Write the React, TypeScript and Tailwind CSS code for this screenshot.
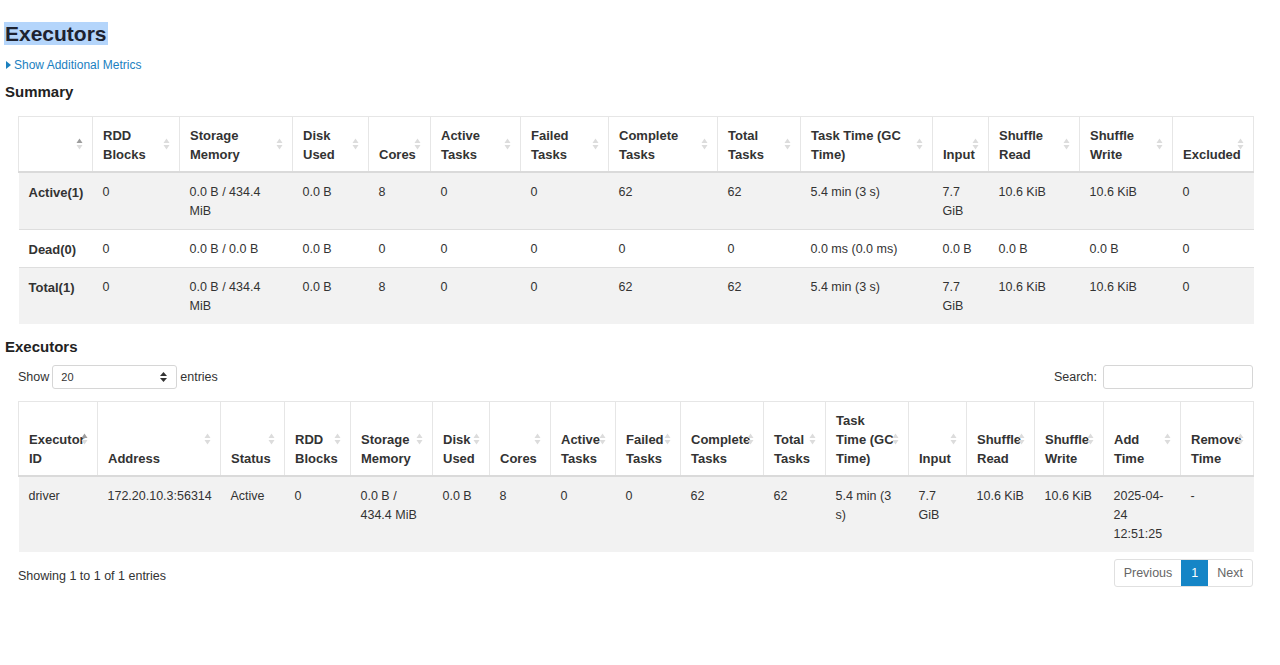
import React from 'react';

const SUMMARY_COLS = [74, 87, 113, 76, 62, 90, 88, 109, 83, 132, 56, 91, 93, 81];
const SUMMARY_HEAD = [
  '',
  'RDD Blocks',
  'Storage Memory',
  'Disk Used',
  'Cores',
  'Active Tasks',
  'Failed Tasks',
  'Complete Tasks',
  'Total Tasks',
  'Task Time (GC Time)',
  'Input',
  'Shuffle Read',
  'Shuffle Write',
  'Excluded',
];
const SUMMARY_ROWS = [
  ['Active(1)', '0', '0.0 B / 434.4 MiB', '0.0 B', '8', '0', '0', '62', '62', '5.4 min (3 s)', '7.7 GiB', '10.6 KiB', '10.6 KiB', '0'],
  ['Dead(0)', '0', '0.0 B / 0.0 B', '0.0 B', '0', '0', '0', '0', '0', '0.0 ms (0.0 ms)', '0.0 B', '0.0 B', '0.0 B', '0'],
  ['Total(1)', '0', '0.0 B / 434.4 MiB', '0.0 B', '8', '0', '0', '62', '62', '5.4 min (3 s)', '7.7 GiB', '10.6 KiB', '10.6 KiB', '0'],
];

const EXEC_COLS = [79, 123, 64, 66, 82, 57, 61, 65, 65, 83, 62, 83, 58, 68, 69, 77, 73];
const EXEC_HEAD = [
  'Executor ID',
  'Address',
  'Status',
  'RDD Blocks',
  'Storage Memory',
  'Disk Used',
  'Cores',
  'Active Tasks',
  'Failed Tasks',
  'Complete Tasks',
  'Total Tasks',
  'Task Time (GC Time)',
  'Input',
  'Shuffle Read',
  'Shuffle Write',
  'Add Time',
  'Remove Time',
];
const EXEC_ROWS = [
  ['driver', '172.20.10.3:56314', 'Active', '0', '0.0 B / 434.4 MiB', '0.0 B', '8', '0', '0', '62', '62', '5.4 min (3 s)', '7.7 GiB', '10.6 KiB', '10.6 KiB', '2025-04-24 12:51:25', '-'],
];

function SortIcon({ active }: { active?: boolean }) {
  return (
    <svg
      width="7"
      height="12"
      viewBox="0 0 7 12"
      className="absolute right-[9px] top-1/2 -translate-y-1/2"
    >
      <path d="M3.5 0.5 L6.5 5 L0.5 5 Z" fill={active ? '#9c9c9c' : '#dcdcdc'} />
      <path d="M3.5 11.5 L6.5 7 L0.5 7 Z" fill="#dcdcdc" />
    </svg>
  );
}

function DataTable({
  cols,
  head,
  rows,
  boldFirst,
}: {
  cols: number[];
  head: string[];
  rows: string[][];
  boldFirst?: boolean;
}) {
  return (
    <table className="table-fixed border-collapse w-[1235px] text-[12.5px] text-[#333]">
      <colgroup>
        {cols.map((w, i) => (
          <col key={i} style={{ width: w }} />
        ))}
      </colgroup>
      <thead>
        <tr>
          {head.map((h, i) => (
            <th
              key={i}
              className="relative border border-[#e6e6e6] border-b-2 border-b-[#dadada] px-[10px] pt-[9px] pb-[7px] text-left align-bottom text-[13px] font-bold leading-[19px] text-[#333]"
            >
              {h}
              <SortIcon active={i === 0} />
            </th>
          ))}
        </tr>
      </thead>
      <tbody>
        {rows.map((r, ri) => (
          <tr key={ri} className={ri % 2 === 0 ? 'bg-[#f2f2f2]' : 'bg-white'}>
            {r.map((c, ci) => (
              <td
                key={ci}
                className={`border-t border-[#dedede] px-[10px] pt-[10px] pb-[8px] align-top leading-[19px] ${
                  boldFirst && ci === 0 ? 'text-[13px] font-bold' : ''
                }`}
              >
                {c}
              </td>
            ))}
          </tr>
        ))}
      </tbody>
    </table>
  );
}

export default function App() {
  return (
    <div className="min-h-screen bg-white font-['Liberation_Sans',Arial,sans-serif] text-[#333]">
      <div className="pl-[4px] pt-[22px]">
        <h3 className="text-[21px] font-bold leading-[24px] text-[#1d2230]">
          <span className="bg-[#b4d5fb] px-[1px]">Executors</span>
        </h3>

        <div className="mt-[12px] flex items-center gap-[3px] pl-[2px] text-[12px] leading-[14px] text-[#1b80bf]">
          <svg width="5" height="8" viewBox="0 0 5 8">
            <path d="M0 0 L5 4 L0 8 Z" fill="#1b80bf" />
          </svg>
          <span>Show Additional Metrics</span>
        </div>

        <h4 className="mt-[11px] pl-[1px] text-[15px] font-bold leading-[18px] text-[#222]">Summary</h4>
      </div>

      <div className="ml-[18px] mt-[15px]">
        <DataTable cols={SUMMARY_COLS} head={SUMMARY_HEAD} rows={SUMMARY_ROWS} boldFirst />
      </div>

      <h4 className="ml-[5px] mt-[14px] text-[15px] font-bold leading-[18px] text-[#222]">Executors</h4>

      <div className="ml-[18px] mt-[9px] flex w-[1235px] items-center justify-between text-[12.5px]">
        <div className="flex items-center gap-[3px]">
          <span>Show</span>
          <div className="flex h-[24px] w-[125px] items-center justify-between rounded-[3px] border border-[#d6d6d6] bg-white pl-[8px] pr-[9px] text-[11px]">
            <span>20</span>
            <svg width="7" height="10" viewBox="0 0 7 10">
              <path d="M3.5 0 L7 4 L0 4 Z" fill="#333" />
              <path d="M3.5 10 L7 6 L0 6 Z" fill="#333" />
            </svg>
          </div>
          <span>entries</span>
        </div>
        <div className="flex items-center gap-[6px]">
          <span>Search:</span>
          <div className="h-[24px] w-[150px] rounded-[3px] border border-[#d6d6d6] bg-white" />
        </div>
      </div>

      <div className="ml-[18px] mt-[12px]">
        <DataTable cols={EXEC_COLS} head={EXEC_HEAD} rows={EXEC_ROWS} />
      </div>

      <div className="ml-[18px] mt-[7px] flex w-[1235px] items-center justify-between text-[12.5px]">
        <span className="pt-[6px]">Showing 1 to 1 of 1 entries</span>
        <div className="flex h-[28px] overflow-hidden rounded-[3px] border border-[#e0e0e0]">
          <span className="flex items-center px-[9px] text-[#666]">Previous</span>
          <span className="flex w-[27px] items-center justify-center bg-[#1585c6] text-white">1</span>
          <span className="flex items-center px-[9px] text-[#666]">Next</span>
        </div>
      </div>
    </div>
  );
}
